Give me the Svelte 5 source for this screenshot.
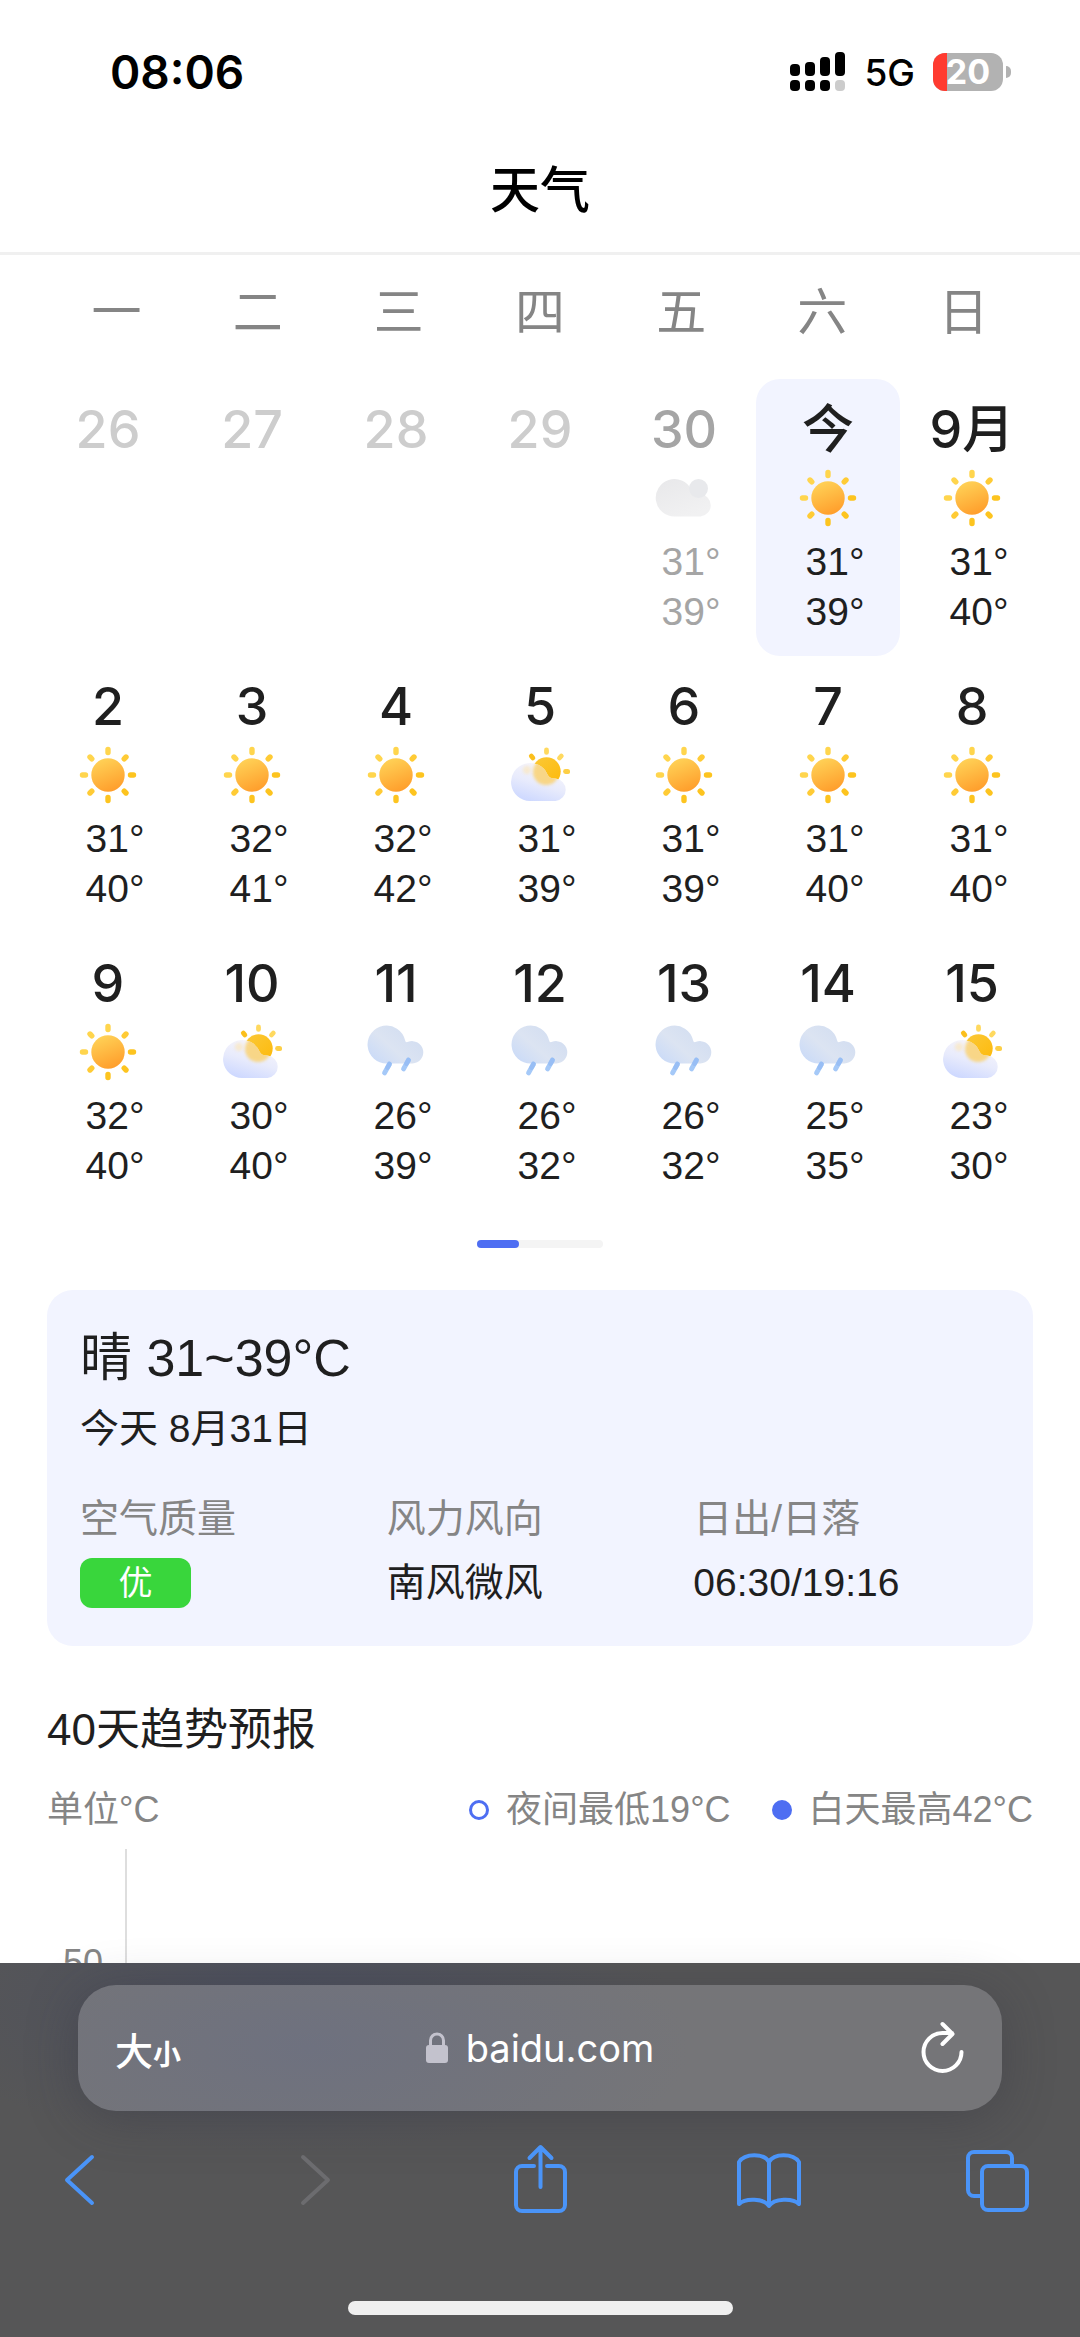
<script>
  const weekdays = ['一', '二', '三', '四', '五', '六', '日'];

  // cloud is only used for past days, so it is drawn in grey
  const days = [
    { label: '26', state: 'empty' },
    { label: '27', state: 'empty' },
    { label: '28', state: 'empty' },
    { label: '29', state: 'empty' },
    { label: '30', state: 'past', icon: 'cloud', low: 31, high: 39 },
    { label: '今', icon: 'sun', low: 31, high: 39 },
    { label: '9月', icon: 'sun', low: 31, high: 40 },
    { label: '2', icon: 'sun', low: 31, high: 40 },
    { label: '3', icon: 'sun', low: 32, high: 41 },
    { label: '4', icon: 'sun', low: 32, high: 42 },
    { label: '5', icon: 'partly', low: 31, high: 39 },
    { label: '6', icon: 'sun', low: 31, high: 39 },
    { label: '7', icon: 'sun', low: 31, high: 40 },
    { label: '8', icon: 'sun', low: 31, high: 40 },
    { label: '9', icon: 'sun', low: 32, high: 40 },
    { label: '10', icon: 'partly', low: 30, high: 40 },
    { label: '11', icon: 'rain', low: 26, high: 39 },
    { label: '12', icon: 'rain', low: 26, high: 32 },
    { label: '13', icon: 'rain', low: 26, high: 32 },
    { label: '14', icon: 'rain', low: 25, high: 35 },
    { label: '15', icon: 'partly', low: 23, high: 30 }
  ];

  const battery = 20;

  let selected = $state(5);
</script>

<svg class="defs" aria-hidden="true">
  <defs>
    <linearGradient id="sun-fill" x1="0.3" y1="0" x2="0.7" y2="1">
      <stop offset="0" stop-color="#ffd257" />
      <stop offset="1" stop-color="#ff9c2a" />
    </linearGradient>
    <linearGradient id="sun-back" x1="0" y1="0" x2="1" y2="1">
      <stop offset="0" stop-color="#fbc938" />
      <stop offset="1" stop-color="#fdb90a" />
    </linearGradient>
    <linearGradient id="cloud-white" x1="0.7" y1="0.1" x2="0.3" y2="1">
      <stop offset="0" stop-color="#f6f5fb" />
      <stop offset="0.5" stop-color="#e8ebfc" />
      <stop offset="1" stop-color="#cdd8ff" />
    </linearGradient>
    <linearGradient id="cloud-grey" x1="0" y1="0" x2="0.6" y2="1">
      <stop offset="0" stop-color="#e8e8ea" />
      <stop offset="1" stop-color="#f1f1f2" />
    </linearGradient>
    <linearGradient id="cloud-rain" gradientUnits="userSpaceOnUse" x1="40" y1="6" x2="8" y2="42">
      <stop offset="0" stop-color="#d3def1" />
      <stop offset="0.5" stop-color="#dce4f2" />
      <stop offset="1" stop-color="#c9daf8" />
    </linearGradient>
    <clipPath id="cloud-clip">
      <path d="M20 56a19 19 0 1 1 17.500-26.500c1.500 3 4 4 8 4a11.300 11.300 0 0 1 0 22.500z" />
    </clipPath>
    <filter id="soft" x="-30%" y="-30%" width="160%" height="160%">
      <feGaussianBlur stdDeviation="1.800" />
    </filter>
  </defs>

  <symbol id="sun" viewBox="0 0 60 60">
    <circle cx="30" cy="30" r="16.700" fill="url(#sun-fill)" />
    <g stroke-width="5.400" stroke-linecap="round">
      <path stroke="#ffd54d" d="M30 4.500v3M12 12l1.800 1.800M4.500 30h3" />
      <path stroke="#ffcb35" d="M48 12l-1.800 1.800M12 48l1.800-1.800" />
      <path stroke="#fdc41f" d="M30 55.500v-3M48 48l-1.800-1.800M55.500 30h-3" />
    </g>
  </symbol>

  <symbol id="partly" viewBox="0 0 60 60">
    <circle cx="36.500" cy="26.500" r="14.200" fill="url(#sun-back)" />
    <g stroke-width="4.800" stroke-linecap="round">
      <path stroke="#fbbf1c" d="M21.300 11l1.600 2" />
      <path stroke="#ffd95f" d="M36.500 5v2.400M51.300 11l-1.800 2" />
      <path stroke="#fdcf45" d="M55.500 26.500h2.200" />
    </g>
    <path fill="url(#cloud-white)" d="M20 56a19 19 0 1 1 17.500-26.500c1.500 3 4 4 8 4a11.300 11.300 0 0 1 0 22.500z" />
    <g clip-path="url(#cloud-clip)">
      <circle cx="36" cy="27" r="13" fill="#fad272" opacity="0.850" filter="url(#soft)" />
      <circle cx="17" cy="25" r="4" fill="#fae6bd" opacity="0.700" filter="url(#soft)" />
    </g>
  </symbol>

  <symbol id="rain" viewBox="0 0 60 60">
    <path fill="url(#cloud-rain)" d="M21 41.500a19 19 0 1 1 18-23.500c.5 2.300 1.500 2.600 3.200 1.800a11.200 11.200 0 1 1 4.300 21.700z" />
    <path fill="none" stroke="#a5c9f8" stroke-width="4.800" stroke-linecap="round" d="M23.500 42l-5 9M42.500 38l-5 9" />
    <path fill="none" stroke="#8fb8f3" stroke-width="4.800" stroke-linecap="round" opacity="0.600" d="M23.500 42l-2 3.600M42.500 38l-2 3.600" />
  </symbol>

  <symbol id="cloud" viewBox="0 0 60 60">
    <path fill="url(#cloud-grey)" d="M20.500 48.500a18.700 18.700 0 1 1 16.700-27c2 3.600 5 4.500 9.300 4.500a11.300 11.300 0 0 1 0 22.500z" />
    <circle cx="44.500" cy="20.500" r="9.500" fill="#e8e9ec" />
  </symbol>
</svg>

<div class="screen">
  <div class="status">
    <span class="time">08:06</span>
    <div class="status-right">
      <svg class="signal" viewBox="0 0 56 40" aria-hidden="true">
        <rect x="0" y="12" width="10" height="12" rx="4" />
        <rect x="15" y="10" width="10" height="14" rx="4" />
        <rect x="30" y="5" width="10" height="19" rx="4" />
        <rect x="45" y="0" width="10" height="24" rx="4" />
        <rect x="0" y="28" width="10" height="11" rx="4" />
        <rect x="15" y="28" width="10" height="11" rx="4" />
        <rect x="30" y="28" width="10" height="11" rx="4" />
        <rect x="45" y="28" width="10" height="11" rx="4" fill="#ccc" />
      </svg>
      <span class="network">5G</span>
      <div class="battery">
        <span class="battery-body">
          <span class="battery-fill" style="width: {battery}%"></span>
          <span class="battery-text">{battery}</span>
        </span>
        <span class="battery-cap"></span>
      </div>
    </div>
  </div>

  <header>
    <h1>天气</h1>
  </header>

  <main>
    <div class="weekdays">
      {#each weekdays as name}
        <span>{name}</span>
      {/each}
    </div>

    <div class="days">
      {#each days as day, i}
        <button
          type="button"
          class="day {day.state ?? ''}"
          class:selected={selected === i}
          disabled={day.state === 'empty'}
          onclick={() => (selected = i)}
        >
          <span class="date">{day.label}</span>
          {#if day.icon}
            <svg class="icon"><use href="#{day.icon}" /></svg>
            <span class="temp">{day.low}°</span>
            <span class="temp">{day.high}°</span>
          {/if}
        </button>
      {/each}
    </div>

    <div class="pager"><span></span></div>

    <section class="card">
      <h2>晴 31~39°C</h2>
      <p>今天 8月31日</p>
      <dl>
        <div>
          <dt>空气质量</dt>
          <dd><span class="badge">优</span></dd>
        </div>
        <div>
          <dt>风力风向</dt>
          <dd>南风微风</dd>
        </div>
        <div>
          <dt>日出/日落</dt>
          <dd>06:30/19:16</dd>
        </div>
      </dl>
    </section>

    <section class="trend">
      <h2>40天趋势预报</h2>
      <div class="legend">
        <span class="unit">单位°C</span>
        <span class="key"><i class="ring"></i>夜间最低19°C</span>
        <span class="key"><i class="dot"></i>白天最高42°C</span>
      </div>
      <div class="chart">
        <span class="tick">50</span>
      </div>
    </section>
  </main>

  <footer>
    <div class="address">
      <button type="button" class="text-size">大<small>小</small></button>
      <a class="url" href="https://baidu.com">
        <svg class="lock" viewBox="0 0 22 32" aria-hidden="true">
          <rect x="0" y="13" width="22" height="18" rx="3" fill="#c3c2cd" />
          <path d="M4.500 14V8.500a6.500 6.500 0 0 1 13 0V14" fill="none" stroke="#c3c2cd" stroke-width="3" />
        </svg>
        baidu.com
      </a>
      <button type="button" class="reload" aria-label="刷新">
        <svg viewBox="0 0 44 54">
          <path d="M40.500 31A19 19 0 1 1 21.500 12H31M21.500 3L31.500 13L21.500 23" />
        </svg>
      </button>
    </div>

    <nav>
      <button type="button" aria-label="后退">
        <svg viewBox="0 0 64 72"><path d="M44 13L19 36L44 59" /></svg>
      </button>
      <button type="button" aria-label="前进" disabled>
        <svg viewBox="0 0 64 72"><path d="M26 13L51 36L26 59" /></svg>
      </button>
      <button type="button" aria-label="分享">
        <svg viewBox="0 0 64 72">
          <path d="M27 22H15a6 6 0 0 0-6 6v33a6 6 0 0 0 6 6H52a6 6 0 0 0 6-6v-33a6 6 0 0 0-6-6H40M33.500 43V3M22.500 14L33.500 3L44.500 14" />
        </svg>
      </button>
      <button type="button" aria-label="书签">
        <svg viewBox="0 0 64 72">
          <path d="M33 18C28 9 9 9 3 18V60C9 54 28 54 33 62C38 54 57 54 63 60V18C57 9 38 9 33 18zM33 18V62" />
        </svg>
      </button>
      <button type="button" aria-label="标签页">
        <svg viewBox="0 0 64 72">
          <rect x="17" y="22" width="45" height="44" rx="6" />
          <path d="M17 52H9a6 6 0 0 1-6-6V14a6 6 0 0 1 6-6H41a6 6 0 0 1 6 6v8" />
        </svg>
      </button>
    </nav>

    <div class="home"></div>
  </footer>
</div>

<style>
  :global(body) {
    background: #fff;
  }

  .defs {
    position: absolute;
    width: 0;
    height: 0;
  }

  .screen {
    display: flex;
    flex-direction: column;
    height: 100vh;
    overflow: hidden;
    color: #1f1f1f;
    font-family: 'Liberation Sans', 'Noto Sans CJK SC', sans-serif;
  }

  h1,
  h2,
  p,
  dl,
  dd {
    margin: 0;
    font-weight: 400;
  }

  button {
    padding: 0;
    border: 0;
    background: none;
    color: inherit;
    font: inherit;
  }

  .status {
    flex: none;
    display: flex;
    justify-content: space-between;
    align-items: center;
    height: 144px;
    padding: 0 69px 0 110px;
    box-sizing: border-box;
    color: #000;
    font-family: Inter, sans-serif;
  }

  .time {
    font-size: 46px;
    font-weight: 600;
  }

  .status-right {
    display: flex;
    align-items: center;
  }

  .signal {
    width: 56px;
    height: 40px;
  }

  .network {
    margin: 0 18px;
    font-size: 37px;
    font-weight: 500;
  }

  .battery {
    display: flex;
    align-items: center;
    gap: 3px;
  }

  .battery-body {
    display: grid;
    width: 70px;
    height: 38px;
    border-radius: 12px;
    background: #b2b2b2;
  }

  .battery-fill,
  .battery-text {
    grid-area: 1 / 1;
  }

  .battery-fill {
    border-radius: 12px 0 0 12px;
    background: #ff3b30;
  }

  .battery-text {
    color: #fff;
    font-size: 34px;
    font-weight: 700;
    line-height: 38px;
    text-align: center;
  }

  .battery-cap {
    width: 5px;
    height: 12px;
    border-radius: 0 6px 6px 0;
    background: #b2b2b2;
  }

  header {
    flex: none;
    padding: 17px 0 31px;
    border-bottom: 3px solid #f0f0f0;
  }

  h1 {
    color: #000;
    font-size: 50px;
    font-weight: 500;
    line-height: 60px;
    text-align: center;
  }

  main {
    flex: 1;
    min-height: 0;
    overflow: hidden;
  }

  .weekdays {
    display: grid;
    grid-template-columns: repeat(7, 1fr);
    padding: 28px 46px 36px;
    color: #858585;
    font-size: 50px;
    line-height: 60px;
    text-align: center;
  }

  .days {
    display: grid;
    grid-template-columns: repeat(7, 1fr);
    padding: 0 36px;
  }

  .day {
    display: flex;
    flex-direction: column;
    align-items: center;
    height: 277px;
    padding: 21px 0 19px;
    border-radius: 24px;
  }

  .day.selected {
    background: #f2f4ff;
  }

  .date {
    font-family: Inter, 'Noto Sans CJK SC', sans-serif;
    font-size: 52px;
    font-weight: 500;
    line-height: 60px;
  }

  .icon {
    width: 60px;
    height: 60px;
    margin: 8px 0 9px;
  }

  .temp {
    padding-left: 14px;
    font-size: 39px;
    line-height: 50px;
  }

  .empty {
    color: #cdcdcd;
  }

  .past {
    color: #a5a5a5;
  }

  .pager {
    width: 126px;
    height: 8px;
    margin: 30px auto 42px;
    border-radius: 4px;
    background: #f4f4f4;
  }

  .pager span {
    display: block;
    width: 42px;
    height: 8px;
    border-radius: 4px;
    background: #4e6ef2;
  }

  .card {
    margin: 0 47px;
    padding: 36px 33px 38px;
    border-radius: 26px;
    background: #f2f4ff;
  }

  .card h2 {
    font-size: 52px;
    line-height: 64px;
  }

  .card p {
    margin-top: 14px;
    font-size: 39px;
    line-height: 50px;
  }

  .card dl {
    display: grid;
    grid-template-columns: repeat(3, 1fr);
    margin-top: 40px;
    font-size: 39px;
    line-height: 50px;
  }

  .card dt {
    color: #858585;
  }

  .card dd {
    margin-top: 14px;
  }

  .badge {
    display: block;
    width: 111px;
    height: 50px;
    border-radius: 12px;
    background: #39d63c;
    color: #fff;
    font-size: 34px;
    text-align: center;
  }

  .trend {
    padding: 54px 47px 0;
  }

  .trend h2 {
    font-size: 44px;
    line-height: 60px;
  }

  .legend {
    display: flex;
    align-items: center;
    gap: 41px;
    margin-top: 25px;
    color: #858585;
    font-size: 36px;
    line-height: 50px;
  }

  .unit {
    margin-right: auto;
  }

  .key {
    display: flex;
    align-items: center;
    gap: 17px;
  }

  .ring,
  .dot {
    box-sizing: border-box;
    width: 20px;
    height: 20px;
    border: 3px solid #4e6ef2;
    border-radius: 50%;
  }

  .dot {
    background: #4e6ef2;
  }

  .chart {
    margin-top: 14px;
  }

  .tick {
    display: block;
    box-sizing: border-box;
    width: 80px;
    height: 200px;
    padding: 94px 22px 0 0;
    border-right: 2px solid #dedede;
    color: #858585;
    font-size: 36px;
    line-height: 40px;
    text-align: right;
  }

  footer {
    flex: none;
    padding: 22px 0;
    background:
      radial-gradient(ellipse 380px 150px at 27% 40px, rgba(72, 77, 98, 0.7), transparent),
      #565657;
    color: #fff;
  }

  .address {
    display: grid;
    grid-template-columns: 1fr auto 1fr;
    align-items: center;
    height: 126px;
    margin: 0 78px;
    padding: 0 37px;
    border-radius: 38px;
    background:
      radial-gradient(ellipse 380px 150px at 25% 50%, #6e717f, transparent),
      #757578;
    box-shadow: 0 8px 50px rgba(50, 50, 60, 0.35);
  }

  .text-size {
    justify-self: start;
    font-size: 38px;
    font-weight: 500;
  }

  .text-size small {
    font-size: 28px;
    font-weight: 700;
  }

  .url {
    display: flex;
    align-items: center;
    gap: 18px;
    color: #fff;
    font-family: Inter, sans-serif;
    font-size: 38px;
    text-decoration: none;
  }

  .lock {
    width: 22px;
    height: 32px;
  }

  .reload {
    justify-self: end;
    display: flex;
  }

  .reload svg {
    width: 44px;
    height: 54px;
    fill: none;
    stroke: #fff;
    stroke-width: 4;
    stroke-linecap: round;
    stroke-linejoin: round;
  }

  nav {
    display: flex;
    justify-content: space-between;
    margin: 33px 51px 85px 48px;
  }

  nav button {
    display: flex;
    color: #4a94f8;
  }

  nav button:disabled {
    color: #6c6c6f;
  }

  nav svg {
    width: 64px;
    height: 72px;
    overflow: visible;
    fill: none;
    stroke: currentColor;
    stroke-width: 4;
    stroke-linecap: round;
    stroke-linejoin: round;
  }

  .home {
    width: 385px;
    height: 14px;
    margin: 0 auto;
    border-radius: 7px;
    background: #efefef;
  }
</style>
